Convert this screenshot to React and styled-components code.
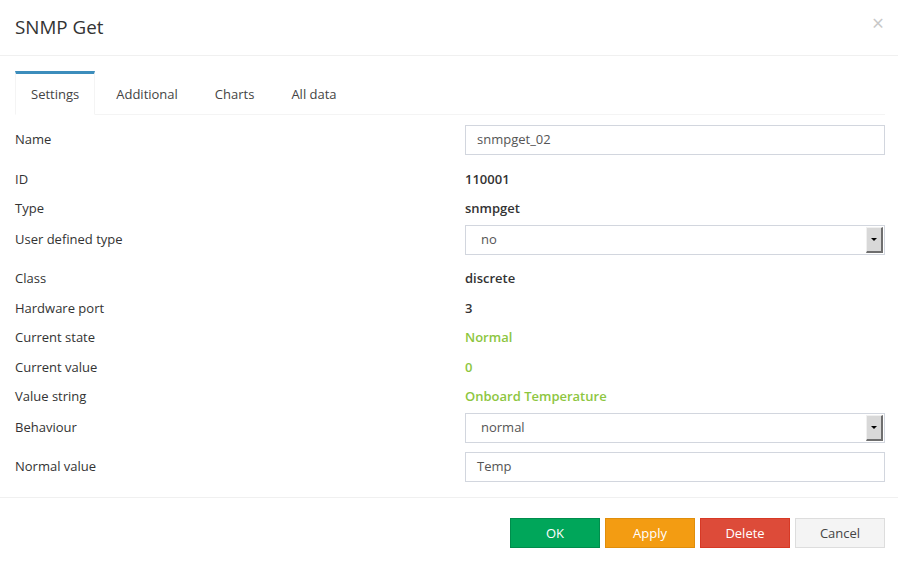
import React from "react";
import styled, { createGlobalStyle } from "styled-components";

const GlobalStyle = createGlobalStyle`
  html, body {
    margin: 0;
    padding: 0;
    background: #fff;
  }
  body {
    font-family: "Open Sans", "Liberation Sans", sans-serif;
    font-size: 13px;
    color: #333;
  }
`;

const rows = [
  { label: "Name", kind: "input", value: "snmpget_02" },
  { label: "ID", kind: "text", value: "110001" },
  { label: "Type", kind: "text", value: "snmpget" },
  { label: "User defined type", kind: "select", value: "no" },
  { label: "Class", kind: "text", value: "discrete" },
  { label: "Hardware port", kind: "text", value: "3" },
  { label: "Current state", kind: "text", value: "Normal", green: true },
  { label: "Current value", kind: "text", value: "0", green: true },
  { label: "Value string", kind: "text", value: "Onboard Temperature", green: true },
  { label: "Behaviour", kind: "select", value: "normal" },
  { label: "Normal value", kind: "input", value: "Temp" },
];

const tabs = ["Settings", "Additional", "Charts", "All data"];

const App = () => (
  <Modal>
    <GlobalStyle />
    <Header>
      <Title>SNMP Get</Title>
      <Close>×</Close>
    </Header>
    <Body>
      <Tabs>
        {tabs.map((t, i) => (
          <Tab key={t} active={i === 0}>
            {t}
          </Tab>
        ))}
      </Tabs>
      <Form>
        {rows.map((r) => (
          <Row key={r.label} field={r.kind !== "text"} first={r.label === "Name"}>
            <Label>{r.label}</Label>
            {r.kind === "text" && <Value green={r.green}>{r.value}</Value>}
            {r.kind === "input" && <Input>{r.value}</Input>}
            {r.kind === "select" && (
              <Select>
                <span>{r.value}</span>
                <Arrow />
              </Select>
            )}
          </Row>
        ))}
      </Form>
    </Body>
    <Footer>
      <Button kind="ok">OK</Button>
      <Button kind="apply">Apply</Button>
      <Button kind="delete">Delete</Button>
      <Button kind="cancel">Cancel</Button>
    </Footer>
  </Modal>
);

const Modal = styled.div`
  width: 898px;
  height: 561px;
  background: #fff;
`;

const Header = styled.div`
  height: 56px;
  border-bottom: 1px solid #f0f0f0;
  display: flex;
  align-items: center;
  justify-content: space-between;
  padding: 0 13px 0 15px;
  box-sizing: border-box;
`;

const Title = styled.h4`
  margin: 0;
  font-size: 18.8px;
  font-weight: 400;
  color: #333;
  position: relative;
  top: -1px;
`;

const Close = styled.span`
  font-size: 21px;
  color: #c8c8c8;
  line-height: 1;
  margin-top: -8px;
  margin-right: 1px;
`;

const Body = styled.div`
  padding: 15px 13px 0 15px;
`;

const Tabs = styled.div`
  display: flex;
  height: 43px;
  border-bottom: 1px solid #f4f4f4;
`;

const Tab = styled.div`
  display: flex;
  align-items: center;
  padding: 0 15px;
  margin: 0 5px -1px 0;
  color: #444;
  box-sizing: border-box;
  border-top: 3px solid ${(p) => (p.active ? "#3c8dbc" : "transparent")};
  border-left: 1px solid ${(p) => (p.active ? "#f4f4f4" : "transparent")};
  border-right: 1px solid ${(p) => (p.active ? "#f4f4f4" : "transparent")};
  border-bottom: 1px solid ${(p) => (p.active ? "#fff" : "transparent")};
  background: ${(p) => (p.active ? "#fff" : "transparent")};
`;

const Form = styled.div`
  padding-top: 10px;
`;

const Row = styled.div`
  display: grid;
  grid-template-columns: 450px 1fr;
  align-items: center;
  min-height: 29.5px;
  margin-top: ${(p) => (p.field && !p.first ? "1px" : "0")};
  margin-bottom: ${(p) => (p.field ? "9.5px" : "0")};
  line-height: 19.5px;
`;

const Label = styled.div`
  color: #333;
`;

const Value = styled.div`
  font-weight: 600;
  color: ${(p) => (p.green ? "#8dc63f" : "#333")};
`;

const Input = styled.div`
  height: 30px;
  box-sizing: border-box;
  border: 1px solid #d2d6de;
  padding: 0 11px;
  display: flex;
  align-items: center;
  color: #555;
`;

const Select = styled(Input)`
  justify-content: space-between;
  padding: 0 1px 0 15px;
`;

const Arrow = styled.span`
  width: 17px;
  height: 26px;
  box-sizing: border-box;
  background: #d8d8d8;
  border-left: 1px solid #f0f0f0;
  border-top: 1px solid #f0f0f0;
  border-right: 2px solid #6e6e6e;
  border-bottom: 2px solid #6e6e6e;
  display: flex;
  align-items: center;
  justify-content: center;
  &::after {
    content: "";
    border-left: 3px solid transparent;
    border-right: 3px solid transparent;
    border-top: 3px solid #000;
  }
`;

const palette = {
  ok: { bg: "#00a65a", border: "#008d4c", color: "#fff" },
  apply: { bg: "#f39c12", border: "#e08e0b", color: "#fff" },
  delete: { bg: "#dd4b39", border: "#d73925", color: "#fff" },
  cancel: { bg: "#f4f4f4", border: "#ddd", color: "#444" },
};

const Footer = styled.div`
  margin-top: 15px;
  border-top: 1px solid #f0f0f0;
  display: flex;
  justify-content: flex-end;
  gap: 5px;
  padding: 20px 13px 0 15px;
`;

const Button = styled.button`
  width: 90px;
  height: 30px;
  font-family: inherit;
  font-size: 13px;
  background: ${(p) => palette[p.kind].bg};
  border: 1px solid ${(p) => palette[p.kind].border};
  color: ${(p) => palette[p.kind].color};
  border-radius: 0;
  padding: 0;
`;

export default App;
